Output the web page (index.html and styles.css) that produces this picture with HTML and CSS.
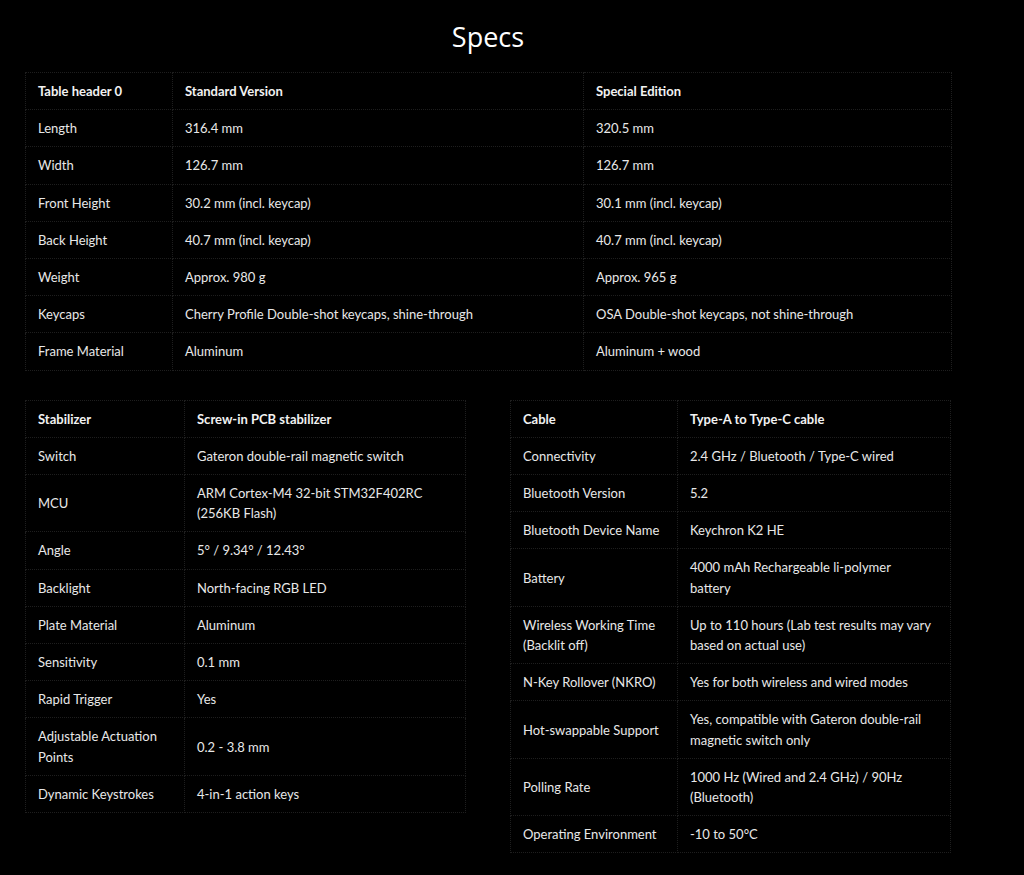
FILE: index.html
```html
<!DOCTYPE html>
<html lang="en">
<head>
    <meta charset="UTF-8">
    <meta name="viewport" content="width=device-width, initial-scale=1.0">
    <title>Specs</title>
    <link rel="stylesheet" href="styles.css">
</head>
<body>
    <section class="specs">
        <h1>Specs</h1>

        <!-- Version comparison -->
        <table class="spec-table compare">
            <colgroup>
                <col class="c-label"><col class="c-std"><col class="c-special">
            </colgroup>
            <thead>
                <tr><th>Table header 0</th><th>Standard Version</th><th>Special Edition</th></tr>
            </thead>
            <tbody>
                <tr><td>Length</td><td>316.4 mm</td><td>320.5 mm</td></tr>
                <tr><td>Width</td><td>126.7 mm</td><td>126.7 mm</td></tr>
                <tr><td>Front Height</td><td>30.2 mm (incl. keycap)</td><td>30.1 mm (incl. keycap)</td></tr>
                <tr><td>Back Height</td><td>40.7 mm (incl. keycap)</td><td>40.7 mm (incl. keycap)</td></tr>
                <tr><td>Weight</td><td>Approx. 980 g</td><td>Approx. 965 g</td></tr>
                <tr><td>Keycaps</td><td>Cherry Profile Double-shot keycaps, shine-through</td><td>OSA Double-shot keycaps, not shine-through</td></tr>
                <tr><td>Frame Material</td><td>Aluminum</td><td>Aluminum + wood</td></tr>
            </tbody>
        </table>

        <div class="spec-columns">
            <table class="spec-table half left">
                <colgroup><col class="c-label"><col></colgroup>
                <thead>
                    <tr><th>Stabilizer</th><th>Screw-in PCB stabilizer</th></tr>
                </thead>
                <tbody>
                    <tr><td>Switch</td><td>Gateron double-rail magnetic switch</td></tr>
                    <tr><td>MCU</td><td>ARM Cortex-M4 32-bit STM32F402RC<br>(256KB Flash)</td></tr>
                    <tr><td>Angle</td><td>5° / 9.34° / 12.43°</td></tr>
                    <tr><td>Backlight</td><td>North-facing RGB LED</td></tr>
                    <tr><td>Plate Material</td><td>Aluminum</td></tr>
                    <tr><td>Sensitivity</td><td>0.1 mm</td></tr>
                    <tr><td>Rapid Trigger</td><td>Yes</td></tr>
                    <tr><td>Adjustable Actuation<br>Points</td><td>0.2 - 3.8 mm</td></tr>
                    <tr><td>Dynamic Keystrokes</td><td>4-in-1 action keys</td></tr>
                </tbody>
            </table>

            <table class="spec-table half right">
                <colgroup><col class="c-label"><col></colgroup>
                <thead>
                    <tr><th>Cable</th><th>Type-A to Type-C cable</th></tr>
                </thead>
                <tbody>
                    <tr><td>Connectivity</td><td>2.4 GHz / Bluetooth / Type-C wired</td></tr>
                    <tr><td>Bluetooth Version</td><td>5.2</td></tr>
                    <tr><td>Bluetooth Device Name</td><td>Keychron K2 HE</td></tr>
                    <tr><td>Battery</td><td>4000 mAh Rechargeable li-polymer<br>battery</td></tr>
                    <tr><td>Wireless Working Time<br>(Backlit off)</td><td>Up to 110 hours (Lab test results may vary<br>based on actual use)</td></tr>
                    <tr><td>N-Key Rollover (NKRO)</td><td>Yes for both wireless and wired modes</td></tr>
                    <tr><td>Hot-swappable Support</td><td>Yes, compatible with Gateron double-rail<br>magnetic switch only</td></tr>
                    <tr><td>Polling Rate</td><td>1000 Hz (Wired and 2.4 GHz) / 90Hz<br>(Bluetooth)</td></tr>
                    <tr><td>Operating Environment</td><td>-10 to 50°C</td></tr>
                </tbody>
            </table>
        </div>
    </section>
</body>
</html>
```

FILE: styles.css
```css
/* Basic CSS Reset */
* {
    box-sizing: border-box;
    margin: 0;
    padding: 0;
}

body {
    background: #000;
    color: #e8e8e8;
    font-family: Lato, "Open Sans", sans-serif;
    font-size: 13px;
    line-height: 20.2px;
}

.specs {
    width: 926px;
    margin-left: 25px;
    padding-top: 18px;
}

.specs h1 {
    font-family: "Open Sans", sans-serif;
    font-weight: 400;
    font-size: 27px;
    line-height: 38px;
    text-align: center;
    color: #fff;
    margin-bottom: 16px;
}

.spec-table {
    border-collapse: collapse;
    table-layout: fixed;
}

.spec-table th,
.spec-table td {
    border: 1px dotted #1e1e1e;
    padding: 8px 12px;
    text-align: left;
    vertical-align: middle;
}

.spec-table th {
    font-weight: 700;
    color: #f2f2f2;
}

.compare {
    width: 926px;
}

.compare .c-label { width: 147px; }
.compare .c-std { width: 411px; }
.compare .c-special { width: 368px; }

.spec-columns {
    display: flex;
    align-items: flex-start;
    gap: 44px;
    margin-top: 29px;
}

.half {
    width: 441px;
}

.left .c-label { width: 159px; }
.right .c-label { width: 167px; }
```
